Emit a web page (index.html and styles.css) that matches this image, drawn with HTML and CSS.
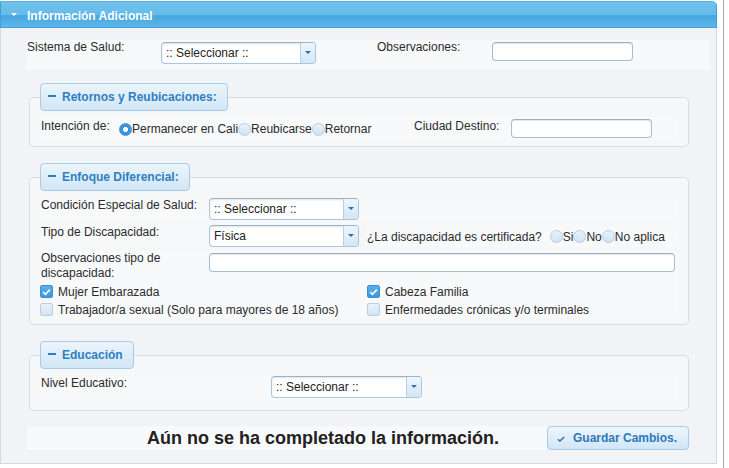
FILE: index.html
```html
<!DOCTYPE html>
<html lang="es">
<head>
<meta charset="utf-8">
<title>Información Adicional</title>
<link rel="stylesheet" href="styles.css">
</head>
<body>
<div class="page">
  <section class="panel">
    <header class="panel-head"><span class="tri"></span><span class="head-title">Información Adicional</span></header>
    <div class="panel-body">

      <div class="row-main band">
        <span class="lbl">Sistema de Salud:</span>
        <div class="sel"><span class="sel-text">:: Seleccionar ::</span><span class="sel-btn"><span class="arrow"></span></span></div>
        <span></span>
        <span class="lbl">Observaciones:</span>
        <div class="inp"></div>
      </div>

      <fieldset class="group">
        <legend class="legend"><span class="minus"></span>Retornos y Reubicaciones:</legend>
        <div class="row-ret band">
          <span class="lbl">Intención de:</span>
          <div class="radios">
            <span class="radio on"></span><span>Permanecer en Cali</span>
            <span class="radio"></span><span>Reubicarse</span>
            <span class="radio"></span><span>Retornar</span>
          </div>
          <span class="lbl">Ciudad Destino:</span>
          <div class="inp"></div>
        </div>
      </fieldset>

      <fieldset class="group">
        <legend class="legend"><span class="minus"></span>Enfoque Diferencial:</legend>
        <div class="row-ed band">
          <span class="lbl">Condición Especial de Salud:</span>
          <div class="sel"><span class="sel-text">:: Seleccionar ::</span><span class="sel-btn"><span class="arrow"></span></span></div>
        </div>
        <div class="row-ed row-b">
          <span class="lbl band">Tipo de Discapacidad:</span>
          <div class="sel"><span class="sel-text">Física</span><span class="sel-btn"><span class="arrow"></span></span></div>
          <span></span>
          <div class="cert band">
            <span class="cert-q">¿La discapacidad es certificada?</span>
            <span class="radio"></span><span>Si</span>
            <span class="radio"></span><span>No</span>
            <span class="radio"></span><span>No aplica</span>
          </div>
        </div>
        <div class="row-ed row-c band">
          <span class="lbl lbl-2">Observaciones tipo de discapacidad:</span>
          <div class="inp inp-wide"></div>
        </div>
        <div class="checks band">
          <label class="chk-item"><span class="chk on"><svg viewBox="0 0 9 8" width="9" height="8"><path d="M1.2 4.2 3.5 6.3 7.8 1.6" fill="none" stroke="#fff" stroke-width="1.6"/></svg></span>Mujer Embarazada</label>
          <label class="chk-item"><span class="chk on"><svg viewBox="0 0 9 8" width="9" height="8"><path d="M1.2 4.2 3.5 6.3 7.8 1.6" fill="none" stroke="#fff" stroke-width="1.6"/></svg></span>Cabeza Familia</label>
          <label class="chk-item"><span class="chk"></span>Trabajador/a sexual (Solo para mayores de 18 años)</label>
          <label class="chk-item"><span class="chk"></span>Enfermedades crónicas y/o terminales</label>
        </div>
      </fieldset>

      <fieldset class="group">
        <legend class="legend"><span class="minus"></span>Educación</legend>
        <div class="row-edu band">
          <span class="lbl">Nivel Educativo:</span>
          <div class="sel"><span class="sel-text">:: Seleccionar ::</span><span class="sel-btn"><span class="arrow"></span></span></div>
        </div>
      </fieldset>

      <div class="bar">
        <div class="bar-msg">Aún no se ha completado la información.</div>
        <button class="btn" type="button"><svg class="btn-ico" viewBox="0 0 8 6" width="8" height="6"><path d="M0.8 3.2 2.9 5 7.2 0.9" fill="none" stroke="#2f6ea8" stroke-width="1.4"/></svg>Guardar Cambios.</button>
      </div>

    </div>
  </section>
  <div class="edge-line"></div>
</div>
</body>
</html>
```

FILE: styles.css
```css
* { box-sizing: border-box; }

html, body {
  margin: 0;
  padding: 0;
  background: #fff;
}

body {
  font-family: "Liberation Sans", Arial, sans-serif;
  font-size: 12px;
  line-height: 14px;
  color: #2b2b2b;
}

.page {
  display: flex;
  height: 468px;
  overflow: hidden;
}

.panel {
  width: 717px;
  height: 463px;
  margin-top: 1px;
  display: flex;
  flex-direction: column;
}

.panel-head {
  height: 27px;
  flex: none;
  display: flex;
  align-items: center;
  padding: 3px 0 0 10px;
  border: 1px solid #3e9fe0;
  border-top-color: #5ab2e6;
  border-radius: 0 5px 0 0;
  background: linear-gradient(#70c2ec 0%, #65bbe9 50%, #45a6e1 55%, #5fb7e8 100%);
  color: #fff;
  font-weight: bold;
}

.tri {
  width: 0;
  height: 0;
  border-left: 3px solid transparent;
  border-right: 3px solid transparent;
  border-top: 3px solid #fff;
  margin: -3px 10px 0 0;
}

.panel-body {
  flex: 1;
  border: 1px solid #d4d9de;
  border-top: 0;
  background: #f1f3f6;
  padding: 12px 0 0 25px;
}

.band { background: #f8f9fb; }

.lbl { display: block; }

/* first row */
.row-main {
  display: grid;
  grid-template-columns: 134px 155px 61px 115px 141px;
  width: 684px;
  padding: 0 0 6px 1px;
  align-items: start;
}
.row-main .sel, .row-main .inp { margin-top: 2px; }

/* select */
.sel {
  display: flex;
  height: 22px;
  border: 1px solid #a9c6df;
  border-top-color: #9cb2c6;
  border-radius: 4px;
  background: #fff;
  box-shadow: inset 0 1px 2px rgba(0, 0, 0, 0.12);
  overflow: hidden;
}
.sel-text {
  flex: 1;
  padding-left: 4px;
  line-height: 20px;
  color: #222;
}
.sel-btn {
  width: 15px;
  flex: none;
  border-left: 1px solid #b7d1e8;
  background: linear-gradient(#eef6fc, #d4e6f5);
  display: flex;
  align-items: center;
  justify-content: center;
}
.arrow {
  width: 0;
  height: 0;
  border-left: 3px solid transparent;
  border-right: 3px solid transparent;
  border-top: 3px solid #2f6fab;
  margin-top: -2px;
}

/* input */
.inp {
  height: 19px;
  border: 1px solid #a7bdd1;
  border-top-color: #9aaebf;
  border-radius: 4px;
  background: #fff;
  box-shadow: inset 0 1px 1px rgba(0, 0, 0, 0.1);
}

/* fieldsets */
.group {
  width: 660px;
  margin: 13px 0 0 3px;
  padding: 6px 10px 6px 10px;
  border: 1px solid #d9dde2;
  border-radius: 5px;
  background: #f6f7f9;
  min-width: 0;
}
.group + .group { margin-top: 16px; }

.legend {
  padding: 6px 10px 6px 6px;
  border: 1px solid #a8cce7;
  border-radius: 4px;
  background: linear-gradient(#eaf4fc, #d2e7f7);
  color: #2f7fc0;
  font-weight: bold;
  line-height: 14px;
}
.minus {
  display: inline-block;
  width: 8px;
  height: 2px;
  background: #2f7fc0;
  vertical-align: middle;
  margin: -4px 6px 0 1px;
}

/* retornos row */
.row-ret {
  display: grid;
  grid-template-columns: 79px 294px 98px 141px;
  padding: 2px 0;
  align-items: start;
}
.row-ret .lbl { padding-left: 1px; }
.radios {
  display: flex;
  align-items: center;
  align-self: stretch;
  padding-top: 1px;
}

.radio {
  width: 13px;
  height: 13px;
  flex: none;
  border-radius: 50%;
  border: 1px solid #b4cee6;
  background: linear-gradient(#e9f2fa, #d0e3f4);
}
.radio.on {
  border-color: #3a93db;
  background: radial-gradient(circle, #fff 0 2.2px, #2e8fdc 2.9px, #4aa4e6 100%);
}

/* enfoque rows */
.group:nth-of-type(2) { padding-top: 7px; }
.row-ed {
  display: grid;
  grid-template-columns: 169px 150px 8px 1fr;
  align-items: start;
}
.row-ed .lbl { padding-left: 1px; }
.row-b { margin-top: 5px; }
.row-b .lbl { align-self: stretch; }
.cert {
  display: flex;
  align-items: center;
  align-self: stretch;
  padding-top: 1px;
}
.cert-q { margin-right: 8px; }
.row-c { margin-top: 4px; }
.lbl-2 { line-height: 15px; }
.inp-wide {
  grid-column: 2 / 5;
  width: 466px;
  margin-top: 2px;
}

.checks {
  display: grid;
  grid-template-columns: 327px 1fr;
  grid-auto-rows: 18px;
  margin-top: 1px;
}
.chk-item {
  display: flex;
  align-items: center;
  gap: 5px;
  padding-top: 1px;
}
.chk {
  width: 13px;
  height: 13px;
  flex: none;
  border-radius: 2px;
  border: 1px solid #b8cfe5;
  background: linear-gradient(#eaf2fa, #d3e4f3);
  display: flex;
  align-items: center;
  justify-content: center;
}
.chk.on {
  border-color: #3b8fd3;
  background: linear-gradient(#5aaeea, #3f98dd);
}

/* educacion */
.group:nth-of-type(3) { padding: 7px 10px 8px; }
.row-edu {
  display: grid;
  grid-template-columns: 231px 151px;
  padding-bottom: 4px;
  align-items: start;
}
.row-edu .lbl { padding-left: 1px; }

/* bottom bar */
.bar {
  display: flex;
  margin: 15px 0 0 1px;
  width: 662px;
}
.bar-msg {
  width: 520px;
  height: 24px;
  padding-left: 72px;
  display: flex;
  align-items: center;
  justify-content: center;
  background: #f8f9fb;
  font-size: 18px;
  font-weight: bold;
  color: #222;
  line-height: 20px;
}
.btn {
  width: 142px;
  height: 24px;
  margin: 0;
  padding: 0 0 0 9px;
  display: flex;
  align-items: center;
  gap: 8px;
  border: 1px solid #a9cde9;
  border-radius: 4px;
  background: linear-gradient(#edf6fd, #d0e6f7);
  color: #2f78b8;
  font-family: "Liberation Sans", Arial, sans-serif;
  font-size: 12px;
  font-weight: bold;
}
.btn-ico { flex: none; margin-top: 1px; }

.edge-line {
  width: 1px;
  height: 468px;
  margin-left: 6px;
  background: #a9a9a9;
  flex: none;
}
```
